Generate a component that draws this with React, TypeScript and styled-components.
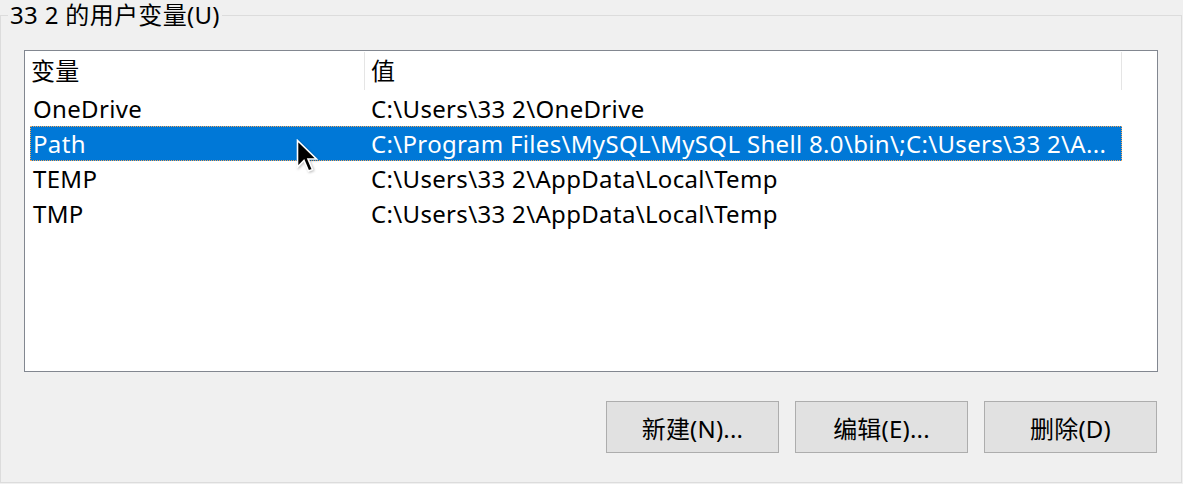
import React from "react";
import styled, { createGlobalStyle } from "styled-components";

const Global = createGlobalStyle`
  html, body {
    margin: 0;
    padding: 0;
    background: #f0f0f0;
  }
  body {
    font-family: "Noto Sans", "Noto Sans CJK SC", sans-serif;
    font-size: 24px;
    letter-spacing: 0.33px;
    color: #000;
  }
`;

const Group = styled.fieldset`
  box-sizing: border-box;
  width: 1182px;
  height: 483px;
  margin: 0;
  padding: 0 23px 0 23px;
  border: 1px solid #dcdcdc;
  display: flex;
  flex-direction: column;
`;

const Legend = styled.legend`
  margin-left: -16px;
  padding: 0 2px;
  font-size: 24px;
  line-height: 30px;
  height: 30px;
`;

const ListBox = styled.div`
  box-sizing: border-box;
  margin-top: 20px;
  width: 1134px;
  height: 322px;
  border: 1px solid #828790;
  background: #fff;
  display: flex;
  flex-direction: column;
`;

const Header = styled.div`
  display: flex;
  height: 40px;
  padding-top: 1px;
  box-sizing: border-box;
`;

const HeaderCell = styled.div<{ $w?: number; $last?: boolean }>`
  box-sizing: border-box;
  width: ${(p) => (p.$w ? `${p.$w}px` : "auto")};
  flex: ${(p) => (p.$w ? "none" : "1")};
  height: 38px;
  line-height: 38px;
  padding-left: 6px;
  border-right: ${(p) => (p.$last ? "none" : "1px solid #e5e5e5")};
  white-space: nowrap;
`;

const Rows = styled.div`
  display: flex;
  flex-direction: column;
  padding-left: 5px;
`;

const Row = styled.div<{ $selected?: boolean }>`
  box-sizing: border-box;
  display: flex;
  width: 1092px;
  height: 35px;
  line-height: 33px;
  border: 1px ${(p) => (p.$selected ? "dotted #f2a65a" : "solid transparent")};
  background: ${(p) => (p.$selected ? "#0078d7" : "transparent")};
  color: ${(p) => (p.$selected ? "#fff" : "#000")};
  white-space: nowrap;
`;

const NameCell = styled.div`
  width: 339px;
  padding-left: 2px;
  box-sizing: border-box;
  flex: none;
`;

const ValueCell = styled.div`
  flex: 1;
  overflow: hidden;
  padding-left: 1px;
`;

const ButtonRow = styled.div`
  display: flex;
  justify-content: flex-end;
  gap: 16px;
  margin-top: 29px;
  padding-right: 1px;
`;

const Button = styled.button`
  box-sizing: border-box;
  width: 173px;
  height: 52px;
  background: #e1e1e1;
  border: 1px solid #adadad;
  font-family: "Noto Sans", "Noto Sans CJK SC", sans-serif;
  font-size: 24px;
  letter-spacing: 0.2px;
  color: #000;
  padding: 0;
`;

const Cursor = styled.svg`
  position: absolute;
  left: 296px;
  top: 139px;
  pointer-events: none;
  filter: drop-shadow(1px 1px 1px rgba(0, 0, 0, 0.25));
`;

const rows = [
  { name: "OneDrive", value: "C:\\Users\\33 2\\OneDrive" },
  {
    name: "Path",
    value: "C:\\Program Files\\MySQL\\MySQL Shell 8.0\\bin\\;C:\\Users\\33 2\\A...",
    selected: true,
  },
  { name: "TEMP", value: "C:\\Users\\33 2\\AppData\\Local\\Temp" },
  { name: "TMP", value: "C:\\Users\\33 2\\AppData\\Local\\Temp" },
];

export default function App() {
  return (
    <>
      <Global />
      <Group>
        <Legend>33 2 的用户变量(U)</Legend>
        <ListBox>
          <Header>
            <HeaderCell $w={340}>变量</HeaderCell>
            <HeaderCell $w={757}>值</HeaderCell>
            <HeaderCell $last />
          </Header>
          <Rows>
            {rows.map((r) => (
              <Row key={r.name} $selected={r.selected}>
                <NameCell>{r.name}</NameCell>
                <ValueCell>{r.value}</ValueCell>
              </Row>
            ))}
          </Rows>
        </ListBox>
        <ButtonRow>
          <Button>新建(N)...</Button>
          <Button>编辑(E)...</Button>
          <Button>删除(D)</Button>
        </ButtonRow>
      </Group>
      <Cursor width="26" height="40" viewBox="0 0 26 40">
        <path
          d="M1.5 1.5 L1.5 28 L8 21.5 L12.5 32 L16.5 30.5 L12 20 L20.5 20 Z"
          fill="#000"
          stroke="#fff"
          strokeWidth="1.6"
          strokeLinejoin="miter"
        />
      </Cursor>
    </>
  );
}
